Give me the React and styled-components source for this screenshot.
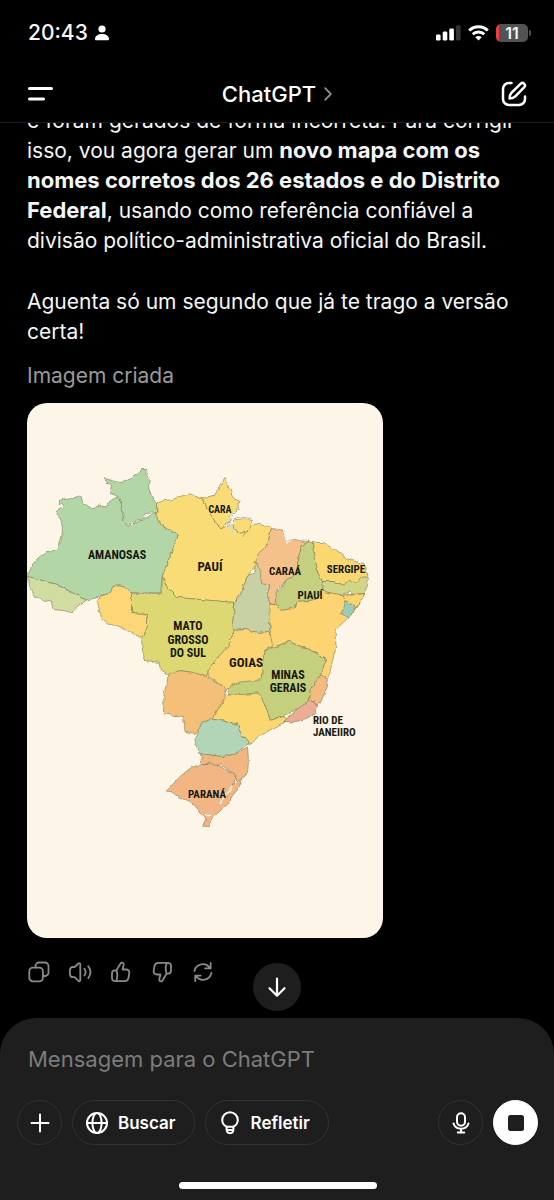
import React from "react";
import styled, { createGlobalStyle } from "styled-components";

const Global = createGlobalStyle`
  *, *::before, *::after { box-sizing: border-box; }
  html, body, #root { height: 100%; }
  body {
    margin: 0;
    background: #000;
    color: #f6f6f6;
    font-family: Inter, "Liberation Sans", sans-serif;
  }
  button, input { font: inherit; color: inherit; }
  svg { display: block; flex: none; }
`;

const Screen = styled.div`
  display: flex;
  flex-direction: column;
  height: 100%;
  overflow: hidden;
  background: #000;
`;

const StatusBar = styled.div`
  flex: none;
  display: flex;
  align-items: center;
  justify-content: space-between;
  height: 66px;
  padding: 0 22px 0 28px;
`;

const StatusGroup = styled.div`
  display: flex;
  align-items: center;
  gap: 7px;
`;

const Clock = styled.span`
  font-size: 21px;
  line-height: 24px;
  font-weight: 500;
`;

const Battery = styled.div`
  position: relative;
  display: flex;
  align-items: center;
  justify-content: center;
  width: 32px;
  height: 18px;
  margin-right: 4px;
  border-radius: 5px;
  background: linear-gradient(90deg, #f23b3b 3px, #525252 3px);
  font-size: 16px;
  line-height: 18px;
  font-weight: 600;

  &::after {
    content: "";
    position: absolute;
    right: -3px;
    top: 6px;
    width: 2px;
    height: 6px;
    border-radius: 0 2px 2px 0;
    background: #525252;
  }
`;

const Header = styled.header`
  flex: none;
  display: grid;
  grid-template-columns: 1fr auto 1fr;
  align-items: center;
  height: 57px;
  padding: 0 27px;
  border-bottom: 1px solid #1c1c1c;
`;

const PlainButton = styled.button`
  display: flex;
  align-items: center;
  gap: 8px;
  padding: 0;
  border: 0;
  background: none;
  color: ${(p) => p.$tone || "#fff"};
  justify-self: ${(p) => p.$side || "center"};
  cursor: pointer;
`;

const Title = styled.span`
  font-size: 22px;
  line-height: 28px;
  font-weight: 500;
`;

const Conversation = styled.main`
  position: relative;
  flex: 1;
  min-height: 0;
  display: flex;
  flex-direction: column;
  justify-content: flex-end;
  overflow: hidden;
  padding: 0 27px 34px;
`;

const Message = styled.article`
  display: flex;
  flex-direction: column;
`;

const Paragraph = styled.p`
  margin: 0 0 ${(p) => p.$after}px;
  font-size: 21px;
  line-height: 30px;
  color: ${(p) => (p.$muted ? "#9a9a9a" : "#f6f6f6")};
`;

const Emphasis = styled.strong`
  font-size: 22px;
  line-height: 28px;
  font-weight: 700;
`;

const Picture = styled.svg`
  width: 100%;
  max-width: 356px;
  height: auto;
  border-radius: 20px;
  background: #fcf5e8;
`;

const MapLabel = styled.text`
  font-family: "Liberation Sans Narrow", "Roboto Condensed", Roboto, sans-serif;
  font-weight: 700;
  font-size: ${(p) => p.$size || 12}px;
  text-anchor: ${(p) => p.$anchor || "middle"};
  fill: #17180f;
`;

const Actions = styled.div`
  display: flex;
  gap: 17px;
  margin-top: 22px;
`;

const ScrollButton = styled.button`
  position: absolute;
  left: 50%;
  bottom: 7px;
  transform: translateX(-50%);
  display: flex;
  align-items: center;
  justify-content: center;
  width: 48px;
  height: 48px;
  padding: 0;
  border: 0;
  border-radius: 50%;
  background: #1e1e1e;
  color: #fff;
`;

const Composer = styled.form`
  flex: none;
  display: flex;
  flex-direction: column;
  padding: 26px 16px 11px 17px;
  border-radius: 36px 36px 0 0;
  background: #1e1e1e;
`;

const MessageInput = styled.input`
  width: 100%;
  height: 30px;
  padding: 0 11px;
  border: 0;
  outline: 0;
  background: none;
  font-size: 22px;
  line-height: 30px;

  &::placeholder { color: #7c7c7c; opacity: 1; }
`;

const Tools = styled.div`
  display: flex;
  align-items: center;
  gap: 10px;
  margin-top: 26px;
`;

const ToolButton = styled.button`
  display: flex;
  align-items: center;
  justify-content: center;
  gap: 9px;
  height: 45px;
  min-width: 45px;
  padding: ${(p) => (p.$pill ? "0 18px 0 12px" : "0")};
  border: 1px solid ${(p) => (p.$solid ? "#fff" : "#323232")};
  border-radius: 23px;
  background: ${(p) => (p.$solid ? "#fff" : "transparent")};
  color: ${(p) => (p.$solid ? "#1e1e1e" : "#fff")};
  font-size: 17px;
  line-height: 24px;
  font-weight: 600;
`;

const Spacer = styled.span`
  flex: 1;
`;

const HomeBar = styled.div`
  align-self: center;
  width: 198px;
  height: 7px;
  margin-top: 37px;
  border-radius: 4px;
  background: #fff;
`;

const Icon = ({ size = 24, width = 2, children }) => (
  <svg
    width={size}
    height={size}
    viewBox={`0 0 ${size} ${size}`}
    fill="none"
    stroke="currentColor"
    strokeWidth={width}
    strokeLinecap="round"
    strokeLinejoin="round"
    aria-hidden="true"
  >
    {children}
  </svg>
);

const thumb = (
  <>
    <path d="M7.400 10.400 11.700 3.300c.8-1.300 3.400-.7 3 1.400L13.600 9.500h3.500c2.200 0 3.600 1.600 3.200 3.800l-.8 4.600c-.4 2.100-1.700 3.300-3.800 3.300H6.200c-2 0-3.200-1.200-3.200-3.200v-4.400c0-2 1.200-3.200 3.200-3.200h1.200z" />
    <path d="M7.400 10.400c1.200 3.400 1.200 7.200-.2 10.600" />
  </>
);

const STATES = [
  ["#b3d6a6", "59.5,500 73,498.5 77.5,496 81.5,497 82.5,502.5 88.5,506 94,508.5 100,505 106,507 109.5,501.5 115,497.5 119,498.5 121.5,505 123.5,521.5 129.5,526.5 156.5,512.5 157.5,520 163.5,526 171.5,531.5 178.5,535 162.5,575 160.5,592.5 130,592.5 127,588 120,586 113,586.5 110.5,592.5 100,597 86.5,600 70,591.5 55,584 27.5,576.5 31.5,566.5 38.5,558.5 46.5,552.5 57.5,550.5 61.5,538 62.5,528 60.5,518.5 57,516 57.5,509.5 63.5,507 64,504 59.5,505"],
  ["#b3d6a6", "103.5,478.5 110.5,480 120,482.5 125,480.5 131.5,478.5 134,475 139.5,473.5 141.5,468.5 146,468.5 147.5,475 150.5,481.5 148.5,485 149.5,491.5 153.5,500 156.5,503.5 156.5,512.5 146,513.5 142.5,519.5 137.5,520 135,524 132,521.5 129.5,526.5 123.5,521.5 124,515 121,510 121.5,505 119,498.5 115,495 109.5,493.5 111,486.5 107,482"],
  ["#d1dca3", "27.5,576.5 55,584 70,591.5 86.5,600 80,605 71.5,612.5 63,610.5 52.5,609.5 51.5,600 45,601.5 33.5,595 28.5,585"],
  ["#f9dc75", "156.5,503.5 161.5,501.5 171.5,499.5 183.5,496.5 191.5,494.5 197,496.5 203,500 210,513.5 215,521.5 221.5,528.5 231.5,525.5 240,533.5 245,531.5 253.5,524 262,525 271.5,528.5 268.5,540 260,553.5 258,562 248.5,575 243.5,586.5 235,602.5 176.5,597.5 167.5,588.5 162.5,575 178.5,535 163.5,526 157.5,520"],
  ["#f9dc75", "197,496.5 206,498 214,496.5 220,485 225,477.5 229.5,488.5 233.5,498.5 240,501.5 236.5,510 231.5,515 228.5,521.5 221.5,528.5 215,521.5 210,513.5 203,500"],
  ["#f9dc75", "233.5,520 243.5,518.5 252.5,520.5 250,528.5 240,533.5 233.5,528.5"],
  ["#ded873", "131.5,593.5 161.5,593.5 162.5,576.5 167.5,588.5 176.5,597.5 235,602.5 232.5,623.5 234,631.5 228.5,646 216.5,658.5 208.5,670 206.5,676.5 193.5,672.5 180,670.5 168.5,675 161.5,670 160,662.5 145,660.5 142.5,650 141.5,638.5 147.5,626.5 147,613.5 131.5,612.5"],
  ["#fdd777", "110.5,592.5 113,586.5 120,586 127,588 131.5,593.5 131.5,612.5 147.5,614 147.5,626 142.5,636.5 135,635 120,626.5 108.5,624 100,616.5 98.5,606.5 97.5,600 101.5,597"],
  ["#c7d1a4", "255,561.5 261,563 262,570 261.5,583.5 270,585 267.5,593.5 270,603.5 271.5,610 270,623.5 270,631.5 258.5,632.5 245,629.5 233.5,630 232.5,623.5 235,602.5 243.5,586.5 248.5,575 255,573"],
  ["#f5c18a", "271.5,528.5 283.5,530 286.5,541.5 290,538.5 298.5,540.5 309,541.5 301.5,546.5 297.5,560 298,573 286.5,580 277.5,588.5 275,605 270,603.5 267.5,593.5 270,585 261.5,583.5 260,570 255,561.5 260,553.5 268.5,540"],
  ["#c4d07f", "309,541.5 312.5,542.5 314,556.5 316.5,570 322.5,581.5 323.5,591.5 315,600 296.5,601.5 293.5,608.5 281.5,610.5 275,605 276,593.5 286.5,580 298,573 297.5,560 301.5,546.5"],
  ["#fbd772", "312.5,542.5 323.5,542.5 336.5,550 346.5,558.5 355,561.5 364,563.5 368,575 367,578 356.5,583.5 343.5,585 333.5,581.5 322.5,581.5 316.5,570 314,556.5"],
  ["#d1d587", "322.5,581.5 333.5,581.5 343.5,585 350,580 356.5,583.5 361,578 367,578 368,583.5 365,593.5 353.5,595 350,592 340,595 323.5,591.5"],
  ["#fcd472", "270,604 275,605 281.5,610.5 293.5,608.5 296.5,601.5 315,600 323.5,591.5 333.5,593.5 343.5,595 365,593.5 355,610 347.5,618.5 335,630 336,646.5 331.5,665 328.5,678.5 320,675 326.5,658.5 310,650 288.5,641.5 271.5,648 270,631.5"],
  ["#fcd472", "343,595 353,595 365,593.5 355,609 345,601"],
  ["#9ccbb5", "346.5,600.5 355,607 348.5,618.5 341.5,613.5"],
  ["#fbd573", "234,631 245,629.5 258.5,632.5 270,631.5 272.5,646.5 265,650 263,670 260,681.5 240,683.5 226.5,688.5 208.5,676.5 208,670 216.5,658.5 228.5,646"],
  ["#c5d07e", "271.5,648 280,645 288.5,641.5 297,645 310,650 326.5,658.5 324,666 320,675 310,690 310,700 298.5,708.5 283.5,716.5 270,720.5 265,703.5 258,693 240,695 227,695 230,686.5 240,682 260,680 263,670 265,650"],
  ["#f4c079", "168.5,675 180,670.5 193.5,672.5 206.5,676.5 226.5,688.5 223,701.5 211.5,719.5 201.5,723.5 195,733.5 185,731.5 183.5,716.5 163.5,714 164,693.5 166.5,683.5"],
  ["#fbd771", "227,695 240,695 258,693 265,703.5 270,720.5 283.5,716.5 287,719 283.5,722.5 270,730 257,738 249,744.5 241.5,735 238.5,725 223.5,720 211.5,719.5 223,701.5"],
  ["#f3bb7f", "320,675 328.5,678.5 327,688 320,703.5 316.5,705 310,700 310,690"],
  ["#ebae94", "310,700 317.5,705 315,713.5 306.5,718.5 293.5,722 283.5,721.5 298,709"],
  ["#f2b681", "200.5,753.5 223.5,756.5 236.5,753.5 247.5,747 248.5,760 247.5,773.5 236.5,784 236.5,776.5 221.5,765 201.5,763.5"],
  ["#f2b685", "201.5,763.5 216.5,764 228.5,771.5 236.5,776.5 232,785 242,779 238.5,786.5 228.5,803.5 219,812 211.5,818.5 208.5,826.5 202.5,826 206,818.5 200,813.5 191.5,801.5 180,798.5 172,792 166.5,791 181.5,775 190,768.5"],
  ["#b2d4b7", "211.5,719.5 223.5,720 238.5,725 241.5,735 248.5,743.5 236.5,753.5 223.5,756.5 200,753.5 195,745 196.5,733.5 201.5,723.5"],
];

const LABELS = [
  ["AMANOSAS", 117, 559],
  ["CARA", 220, 513, 10],
  ["PAUÍ", 210, 571, 13],
  ["CARAÁ", 285, 575, 11],
  ["SERGIPE", 346, 573, 11],
  ["PIAUÍ", 310, 599, 11],
  ["MATO", 188, 630],
  ["GROSSO", 188, 644],
  ["DO SUL", 188, 657],
  ["GOIAS", 246, 667, 13],
  ["MINAS", 288, 679],
  ["GERAIS", 288, 692],
  ["RIO DE", 313, 724, 11, "start"],
  ["JANEIIRO", 313, 736, 11, "start"],
  ["PARANÁ", 207, 798, 11],
];

const BrazilMap = () => (
  <Picture viewBox="27 403 356 535" role="img" aria-label="Mapa do Brasil">
    <defs>
      <filter id="coast" x="-5%" y="-5%" width="110%" height="110%" colorInterpolationFilters="sRGB">
        <feTurbulence type="fractalNoise" baseFrequency="0.16" numOctaves="2" seed="4" result="noise" />
        <feDisplacementMap in="SourceGraphic" in2="noise" scale="4" xChannelSelector="R" yChannelSelector="G" />
      </filter>
    </defs>
    <g filter="url(#coast)" stroke="#77754f" strokeOpacity="0.8" strokeWidth="0.7" strokeLinejoin="round">
      {STATES.map(([fill, points], i) => (
        <polygon key={i} fill={fill} points={points} />
      ))}
      <path d="M240 508l-8 8-4 8 4-3 3-3 7-1 10 2M230 521l-3 6 5-3v6l4 3" fill="none" stroke="#fcf5e8" strokeOpacity="1" strokeWidth="2" />
      <path d="M240 508l-8 8-4 8 4-3 3-3 7-1 10 2M230 521l-3 6 5-3v6l4 3M245 532l-2 5" fill="none" stroke="#7e8f86" />
      <path d="M285 530l2 13 4-5M232 786l-7 10-5 7M205 816l6-1" fill="none" stroke="#e9f0e4" strokeOpacity="1" strokeWidth="1.5" />
    </g>
    {LABELS.map(([text, x, y, size, anchor]) => (
      <MapLabel key={text} x={x} y={y} $size={size} $anchor={anchor}>
        {text}
      </MapLabel>
    ))}
  </Picture>
);

export default function App() {
  return (
    <>
      <Global />
      <Screen>
        <StatusBar>
          <StatusGroup>
            <Clock>20:43</Clock>
            <svg width="14" height="16" viewBox="0 0 14 16" fill="#fff" aria-hidden="true">
              <circle cx="7" cy="4" r="3.6" />
              <path d="M0 14c0-3 3-5 7-5s7 2 7 5c0 .8-.4 1.3-1.2 1.3H1.200C.4 15.300 0 14.800 0 14z" />
            </svg>
          </StatusGroup>
          <StatusGroup>
            <svg width="25" height="16" viewBox="0 0 25 16" fill="#fff" aria-hidden="true">
              <rect x="0" y="9.500" width="4.600" height="6" rx="1.300" />
              <rect x="6.700" y="6.500" width="4.600" height="9" rx="1.300" />
              <rect x="13.300" y="3.500" width="4.600" height="12" rx="1.300" />
              <rect x="20" y="0.300" width="4.600" height="15.200" rx="1.300" fill="#333" />
            </svg>
            <svg width="21" height="16" viewBox="0 0 21 16" fill="none" stroke="#fff" strokeWidth="2.900" aria-hidden="true">
              <path d="M1.200 5.500C6.400.5 14.600.5 19.800 5.500" />
              <path d="M4.700 9.300c3.300-3.100 8.300-3.100 11.600 0" />
              <path d="M7.300 12.200c1.800-1.700 4.600-1.700 6.400 0L10.500 15.500z" fill="#fff" stroke="none" />
            </svg>
            <Battery>11</Battery>
          </StatusGroup>
        </StatusBar>

        <Header>
          <PlainButton type="button" aria-label="Menu" $side="start">
            <Icon size={26} width={3}>
              <path d="M2.500 7.500h22M2.500 18h14" />
            </Icon>
          </PlainButton>
          <PlainButton type="button">
            <Title>ChatGPT</Title>
            <svg width="8" height="14" viewBox="0 0 8 14" fill="none" stroke="#8c8c8c" strokeWidth="1.800" strokeLinecap="round" strokeLinejoin="round" aria-hidden="true">
              <path d="M1.200 1.200 6.800 7l-5.600 5.800" />
            </svg>
          </PlainButton>
          <PlainButton type="button" aria-label="Nova conversa" $side="end">
            <Icon size={26} width={2.5}>
              <path d="M10.500 2H8a6 6 0 0 0-6 6v10a6 6 0 0 0 6 6h10a6 6 0 0 0 6-6v-2.500" />
              <path d="M8.600 17.400c0-2.800.7-4.500 2-5.800l9.200-9c2.300-2 5.600 1.300 3.500 3.600l-9 9.200c-1.300 1.300-3 2-5.700 2z" />
            </Icon>
          </PlainButton>
        </Header>

        <Conversation>
          <Message>
            <Paragraph $after={31}>
              e foram gerados de forma incorreta. Para corrigir isso, vou agora gerar um{" "}
              <Emphasis>novo mapa com os nomes corretos dos 26 estados e do Distrito Federal</Emphasis>, usando como
              referência confiável a divisão político-administrativa oficial do Brasil.
            </Paragraph>
            <Paragraph $after={14}>Aguenta só um segundo que já te trago a versão certa!</Paragraph>
            <Paragraph $after={12} $muted>
              Imagem criada
            </Paragraph>
            <BrazilMap />
            <Actions>
              <PlainButton type="button" aria-label="Copiar" $tone="#8a8a8a">
                <Icon width={1.8}>
                  <rect x="2.300" y="7.700" width="13.600" height="13.600" rx="3.600" />
                  <path d="M8.500 7.500V6a3.500 3.500 0 0 1 3.500-3.500h6A3.500 3.500 0 0 1 21.500 6v6.500A3.500 3.500 0 0 1 18 16h-2" />
                </Icon>
              </PlainButton>
              <PlainButton type="button" aria-label="Ouvir" $tone="#8a8a8a">
                <Icon width={1.8}>
                  <path d="M10.400 3.500 6.600 7H5.100C3 7 1.900 8.400 1.900 10.300v3.600c0 1.900 1.100 3.300 3.200 3.300h1.500l3.800 3.700c.8.700 1.900.2 1.900-.8V4.300c0-1-1.100-1.500-1.900-.8z" />
                  <path d="M16.400 8.800c1.500 2 1.500 4.700 0 6.700M20.300 6.300c2.700 3.600 2.700 8.200 0 11.800" />
                </Icon>
              </PlainButton>
              <PlainButton type="button" aria-label="Boa resposta" $tone="#8a8a8a">
                <Icon width={1.8}>{thumb}</Icon>
              </PlainButton>
              <PlainButton type="button" aria-label="Resposta ruim" $tone="#8a8a8a">
                <Icon width={1.8}>
                  <g transform="rotate(180 12 12)">{thumb}</g>
                </Icon>
              </PlainButton>
              <PlainButton type="button" aria-label="Tentar de novo" $tone="#8a8a8a">
                <Icon width={1.8}>
                  <path d="M3.400 11A8.500 8.500 0 0 1 18.900 8.200M19.600 2.900v5.500h-5.500" />
                  <path d="M20.400 13A8.500 8.500 0 0 1 4.900 15.800M4.200 21.100v-5.500h5.500" />
                </Icon>
              </PlainButton>
            </Actions>
          </Message>
          <ScrollButton type="button" aria-label="Ir para o fim">
            <Icon width={2.2}>
              <path d="M12 3.500v17M4.500 13.200l7.500 7.500 7.500-7.500" />
            </Icon>
          </ScrollButton>
        </Conversation>

        <Composer onSubmit={(e) => e.preventDefault()}>
          <MessageInput type="text" aria-label="Mensagem" placeholder="Mensagem para o ChatGPT" />
          <Tools>
            <ToolButton type="button" aria-label="Adicionar">
              <Icon width={2}>
                <path d="M12 3.500v17M3.500 12h17" />
              </Icon>
            </ToolButton>
            <ToolButton type="button" $pill>
              <Icon width={2}>
                <circle cx="12" cy="12" r="10" />
                <ellipse cx="12" cy="12" rx="4.600" ry="10" />
                <path d="M2 12h20" />
              </Icon>
              Buscar
            </ToolButton>
            <ToolButton type="button" $pill>
              <Icon width={2}>
                <path d="M8.600 15.700C5.800 14.300 4.200 11.900 4.200 9a7.800 7.800 0 0 1 15.600 0c0 2.900-1.600 5.300-4.400 6.700z" />
                <path d="M8.600 15.700v2.600c0 2.300 1.400 3.900 3.400 3.900s3.400-1.600 3.400-3.900v-2.600M8.800 18.900h6.400" />
              </Icon>
              Refletir
            </ToolButton>
            <Spacer />
            <ToolButton type="button" aria-label="Ditar">
              <Icon width={2}>
                <rect x="8" y="2.300" width="8" height="12.400" rx="4" />
                <path d="M4.500 12.500c1 3.300 3.900 5.200 7.500 5.200s6.500-1.900 7.500-5.200M12 17.700v3.600M8.800 21.500h6.400" />
              </Icon>
            </ToolButton>
            <ToolButton type="button" aria-label="Parar" $solid>
              <svg width="16" height="16" viewBox="0 0 16 16" aria-hidden="true">
                <rect width="16" height="16" rx="2.500" fill="currentColor" />
              </svg>
            </ToolButton>
          </Tools>
          <HomeBar />
        </Composer>
      </Screen>
    </>
  );
}
